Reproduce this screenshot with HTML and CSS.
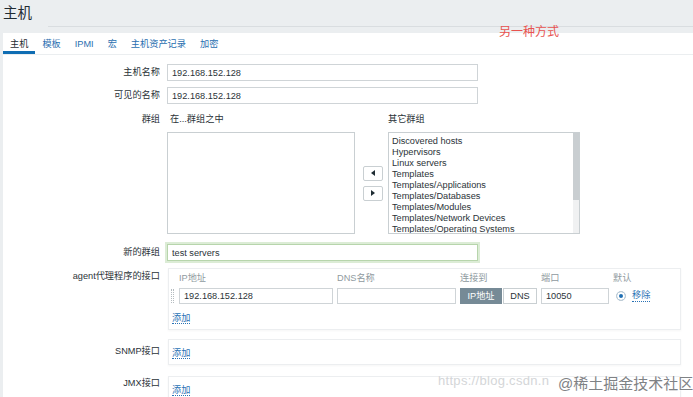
FILE: index.html
```html
<!DOCTYPE html>
<html lang="zh-CN">
<head>
  <meta charset="UTF-8" />
  <title>主机</title>
  <link rel="stylesheet" href="styles.css">
</head>
<body>

  <header class="page-head">
    <h1>主机</h1>
    <div class="head-line"></div>
  </header>

  <main class="panel">
    <!-- Onglets -->
    <nav class="tabs">
      <span class="tab active">主机</span>
      <span class="tab">模板</span>
      <span class="tab">IPMI</span>
      <span class="tab">宏</span>
      <span class="tab">主机资产记录</span>
      <span class="tab">加密</span>
    </nav>

    <div class="form">
      <div class="form-row r-host">
        <label>主机名称</label>
        <input class="text" type="text" value="192.168.152.128">
      </div>
      <div class="form-row r-visible">
        <label>可见的名称</label>
        <input class="text" type="text" value="192.168.152.128">
      </div>

      <div class="form-row r-groups">
        <label class="lbl-head">群组</label>
        <div class="groups">
          <div class="group-col">
            <div class="group-head indent">在...群组之中</div>
            <div class="listbox"></div>
          </div>
          <div class="move-btns">
            <button class="move-btn">
              <svg viewBox="0 0 4 6" width="4" height="6"><polygon points="4,0 4,6 0,3"/></svg>
            </button>
            <button class="move-btn">
              <svg viewBox="0 0 4 6" width="4" height="6"><polygon points="0,0 0,6 4,3"/></svg>
            </button>
          </div>
          <div class="group-col">
            <div class="group-head">其它群组</div>
            <div class="listbox right">
              <ul class="items">
                <li>Discovered hosts</li>
                <li>Hypervisors</li>
                <li>Linux servers</li>
                <li>Templates</li>
                <li>Templates/Applications</li>
                <li>Templates/Databases</li>
                <li>Templates/Modules</li>
                <li>Templates/Network Devices</li>
                <li>Templates/Operating Systems</li>
              </ul>
              <div class="scroll">
                <div class="thumb"></div>
                <div class="track"></div>
              </div>
            </div>
          </div>
        </div>
      </div>

      <div class="form-row r-newgroup">
        <label>新的群组</label>
        <input class="text green" type="text" value="test servers">
      </div>

      <div class="form-row r-agent">
        <label class="lbl-agent">agent代理程序的接口</label>
        <div class="iface-box">
          <div class="iface-grid">
            <span></span>
            <span class="col-head">IP地址</span>
            <span class="col-head">DNS名称</span>
            <span class="col-head">连接到</span>
            <span class="col-head">端口</span>
            <span class="col-head">默认</span>

            <span class="handle"></span>
            <input class="text small" type="text" value="192.168.152.128">
            <input class="text small" type="text" value="">
            <div class="connect">
              <span class="seg on">IP地址</span>
              <span class="seg">DNS</span>
            </div>
            <input class="text small" type="text" value="10050">
            <div class="default">
              <span class="radio"></span>
              <a class="link">移除</a>
            </div>
          </div>
          <div class="add-line"><a class="link">添加</a></div>
        </div>
      </div>

      <div class="form-row r-snmp">
        <label class="lbl-snmp">SNMP接口</label>
        <div class="iface-box plain">
          <div class="add-line"><a class="link">添加</a></div>
        </div>
      </div>

      <div class="form-row r-jmx">
        <label class="lbl-jmx">JMX接口</label>
        <div class="iface-box plain">
          <div class="add-line"><a class="link">添加</a></div>
        </div>
      </div>
    </div>
  </main>

  <!-- Annotations par-dessus la capture -->
  <div class="note">另一种方式</div>
  <div class="wm-url">https://blog.csdn.n</div>
  <div class="wm-juejin">@稀土掘金技术社区</div>

</body>
</html>
```

FILE: styles.css
```css
/* Base */
* {
  margin: 0;
  padding: 0;
  box-sizing: border-box;
}
html, body {
  width: 100%;
  height: 100%;
  overflow: hidden;
}
body {
  background: #ebeef0;
  color: #2b3338;
  font-family: 'Liberation Sans', 'Noto Sans CJK SC', sans-serif;
  font-size: 9.2px;
  position: relative;
}

/* Titre */
.page-head {
  height: 33px;
  padding-top: 5px;
}
.page-head h1 {
  font-weight: normal;
  font-size: 14.5px;
  line-height: 17px;
  padding-left: 3px;
  color: #1f2c33;
}
.head-line {
  margin: 4px 0 0 48px;
  border-top: 1px solid #d9dde0;
}

/* Panneau blanc */
.panel {
  margin-left: 3px;
  background: #fff;
  height: calc(100% - 33px);
}

/* Onglets */
.tabs {
  display: flex;
  border-bottom: 1px solid #ebeef0;
}
.tab {
  padding: 5px 7px 1px;
  line-height: 12px;
  color: #2a6fb0;
  border-bottom: 3px solid transparent;
}
.tab.active {
  color: #1f2c33;
  border-bottom-color: #0f6db3;
}

/* Formulaire */
.form {
  padding-top: 9px;
}
.form-row {
  display: grid;
  grid-template-columns: 157px 1fr;
  column-gap: 7px;
  align-items: start;
}
.form-row label {
  text-align: right;
  line-height: 17px;
  color: #2b3338;
}
.r-visible { margin-top: 6px; }
.r-groups { margin-top: 9px; }
.r-newgroup { margin-top: 10px; }
.r-agent { margin-top: 7px; }
.r-snmp { margin-top: 9px; }
.r-jmx { margin-top: 11px; }

.lbl-head { line-height: 12px !important; }
.lbl-agent { margin-top: 0; }
.lbl-snmp { margin-top: 4px; }
.lbl-jmx { margin-top: -1px; }

input.text {
  display: block;
  width: 311px;
  height: 17px;
  padding: 0 4px;
  border: 1px solid #cfd4d7;
  font-family: 'Liberation Sans', 'Noto Sans CJK SC', sans-serif;
  font-size: 9.2px;
  color: #2b3338;
  background: #fff;
  outline: none;
}
input.text.green {
  border-color: #b7d5ac;
  box-shadow: 0 0 0 2px #dcecd6;
}
input.text.small {
  width: 100%;
  height: 16px;
}

/* Groupes */
.groups {
  display: grid;
  grid-template-columns: 188px 33px 192px;
}
.group-head {
  line-height: 12px;
  margin-bottom: 7px;
}
.group-head.indent {
  padding-left: 3px;
}
.listbox {
  height: 102px;
  border: 1px solid #c9cfd2;
  background: #fff;
}
.listbox.right {
  display: flex;
}
.items {
  flex: 1;
  list-style: none;
  padding: 3px 3px 0;
  overflow: hidden;
  line-height: 11px;
  color: #2b3338;
}
.scroll {
  width: 6px;
  display: flex;
  flex-direction: column;
}
.thumb {
  height: 67px;
  background: #c9ced1;
}
.track {
  flex: 1;
  background: #f0f1f2;
}
.move-btns {
  padding-top: 19px;
  height: 121px;
  display: flex;
  flex-direction: column;
  justify-content: center;
  align-items: center;
  gap: 5px;
  padding-left: 3px;
}
.move-btn {
  width: 20px;
  height: 15px;
  border: 1px solid #c9cfd2;
  border-radius: 2px;
  background: #fff;
  display: flex;
  align-items: center;
  justify-content: center;
}
.move-btn svg {
  fill: #1f2c33;
}

/* Interfaces */
.iface-box {
  width: 513px;
  margin-left: 1px;
  border: 1px solid #eceef0;
  box-shadow: 0 1px 2px rgba(0,0,0,0.04);
  padding: 3px 0 5px 2px;
}
.iface-box.plain {
  padding: 7px 0 5px 2px;
}
.iface-grid {
  display: grid;
  grid-template-columns: 4px 154px 119px 77px 68px 1fr;
  column-gap: 4px;
  row-gap: 4px;
  align-items: center;
}
.col-head {
  line-height: 12px;
  color: #8f9aa0;
}
.handle {
  width: 3px;
  height: 14px;
  border-left: 1px dotted #b5bcc0;
  border-right: 1px dotted #b5bcc0;
}
.connect {
  display: flex;
  gap: 1px;
}
.seg {
  height: 16px;
  line-height: 14px;
  border: 1px solid #c9cfd2;
  text-align: center;
  background: #fff;
  width: 34px;
}
.seg.on {
  width: 42px;
  background: #768a96;
  border-color: #768a96;
  color: #fff;
}
.default {
  display: flex;
  align-items: center;
  gap: 6px;
  padding-left: 3px;
}
.radio {
  width: 10px;
  height: 10px;
  border-radius: 50%;
  border: 1px solid #c3ced5;
  background: #1f6fb3;
  box-shadow: inset 0 0 0 2px #fff;
}
.link {
  color: #2a72b5;
  border-bottom: 1px dotted #2a72b5;
  line-height: 11px;
}
.add-line {
  padding: 8px 0 0 1px;
  line-height: 12px;
}
.iface-box.plain .add-line {
  padding-top: 0;
}

/* Annotations */
.note {
  position: absolute;
  left: 499px;
  top: 24px;
  font-size: 12px;
  line-height: 16px;
  color: #e8524f;
  white-space: nowrap;
}
.wm-url {
  position: absolute;
  left: 438px;
  top: 373px;
  font-size: 13px;
  color: #d4d6d8;
  letter-spacing: 0.3px;
  white-space: nowrap;
}
.wm-juejin {
  position: absolute;
  left: 558px;
  top: 375px;
  font-size: 15px;
  line-height: 18px;
  color: #7f8285;
  white-space: nowrap;
  text-shadow: 0 0 2px #fff, 0 0 2px #fff;
}
```
